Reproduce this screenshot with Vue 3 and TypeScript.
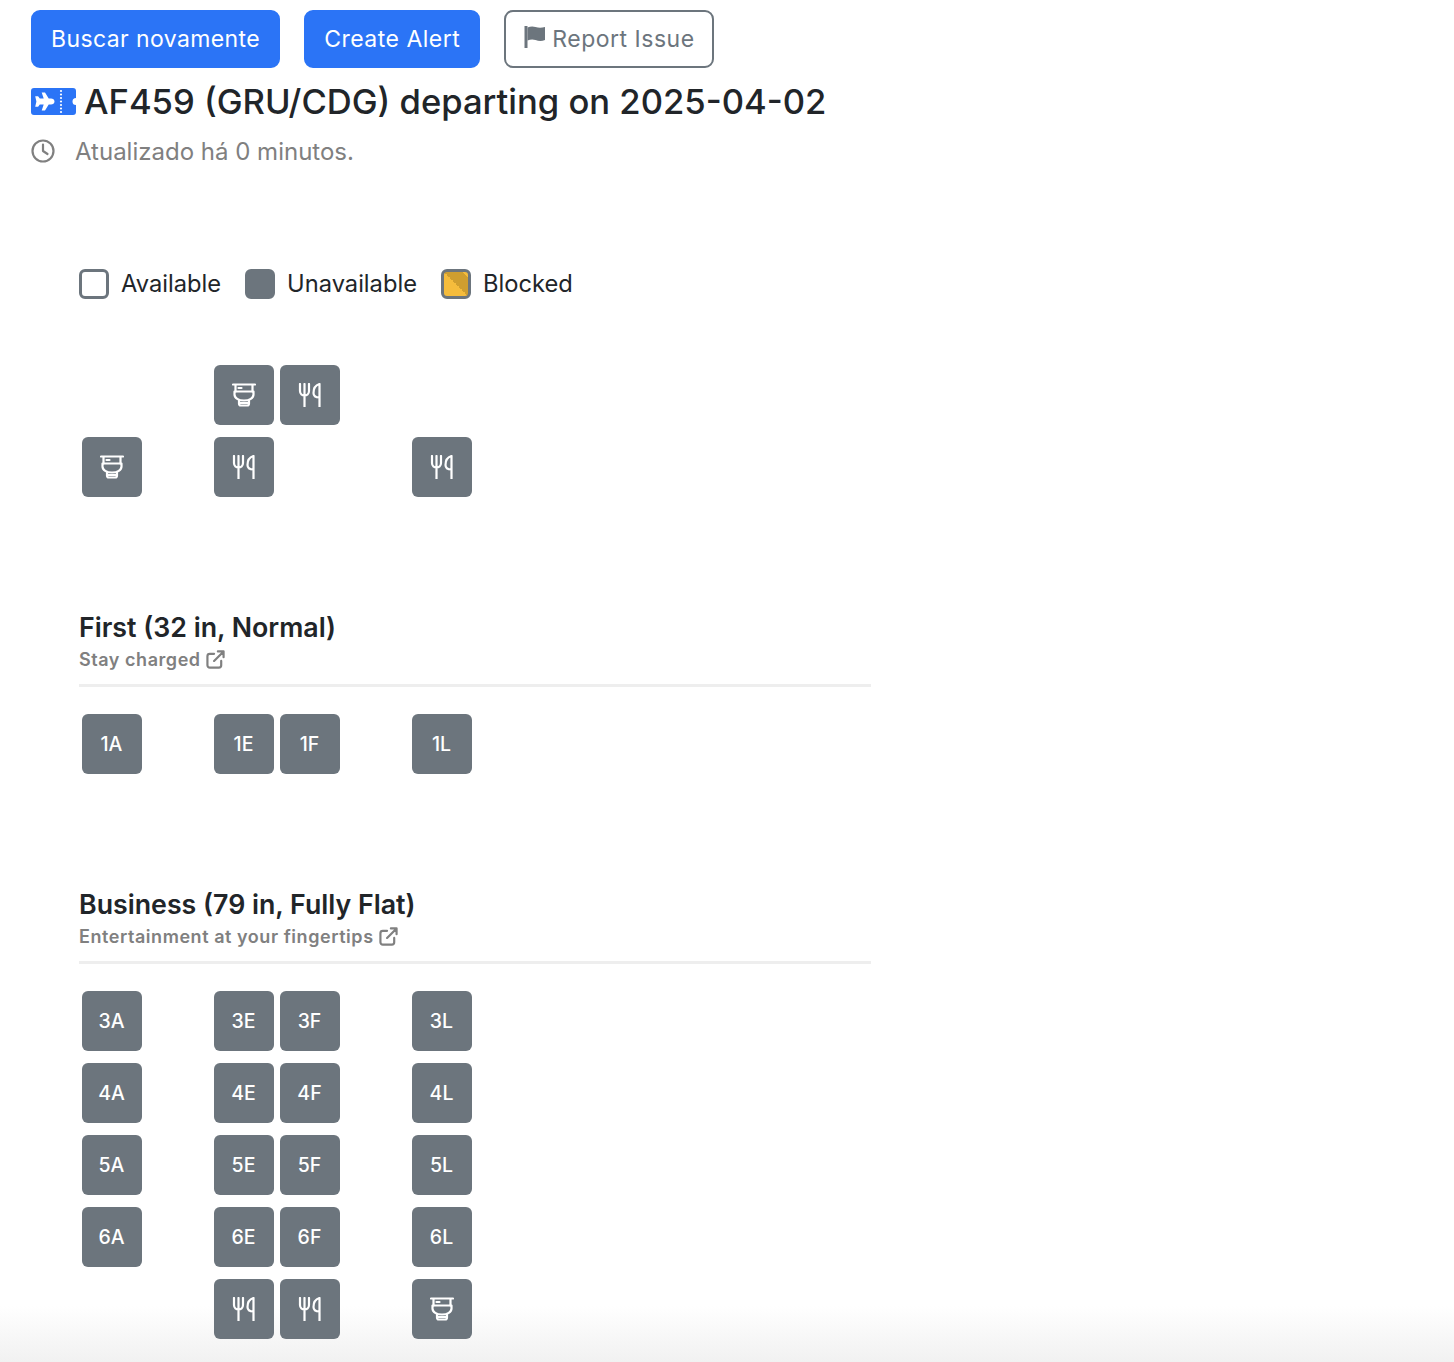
<script setup lang="ts">
type Cell = string | null

const topRows: Cell[] = [
  null, null, 'toilet', 'food', null, null,
  'toilet', null, 'food', null, null, 'food',
]

function seatRow(n: number): Cell[] {
  return [`${n}A`, null, `${n}E`, `${n}F`, null, `${n}L`]
}

const sections: { title: string; sub: string; cells: Cell[] }[] = [
  { title: 'First (32 in, Normal)', sub: 'Stay charged', cells: seatRow(1) },
  {
    title: 'Business (79 in, Fully Flat)',
    sub: 'Entertainment at your fingertips',
    cells: [...seatRow(3), ...seatRow(4), ...seatRow(5), ...seatRow(6), null, null, 'food', 'food', null, 'toilet'],
  },
]
</script>

<template>
  <div class="page">
    <div class="actions">
      <button class="btn primary">Buscar novamente</button>
      <button class="btn primary">Create Alert</button>
      <button class="btn outline">
        <svg class="flag" viewBox="0 0 22 22" aria-hidden="true">
          <path d="M.5 0h3v22h-3z" />
          <path d="M3.500 1.500c2.500-1 5-1.500 8-.5 3 1 6 1 9.500 0v13c-3.500 1.500-6.500 1-9.500 0-3-1-5.500-.5-8 .5z" />
        </svg>
        Report Issue
      </button>
    </div>

    <h1 class="title">
      <svg class="ticket" viewBox="0 0 45 27" aria-hidden="true">
        <path
          fill="#2b74f6"
          d="M3 0h39a3 3 0 0 1 3 3v7a3.500 3.500 0 0 0 0 7v7a3 3 0 0 1-3 3H3a3 3 0 0 1-3-3V3a3 3 0 0 1 3-3z"
        />
        <path
          fill="#fff"
          d="M23.500 13.500c0 1.700-1.600 3-3.500 3h-2.300l-3.700 6h-3.300l2-6H8.800l-1.700 2.300H4.200l1.200-5.300-1.200-5.300h2.900l1.700 2.300h3.900l-2-6H14l3.700 6H20c1.900 0 3.500 1.300 3.500 3z"
        />
        <g fill="#fff">
          <circle cx="30" cy="3" r="1.100" />
          <circle cx="30" cy="6.500" r="1.100" />
          <circle cx="30" cy="10" r="1.100" />
          <circle cx="30" cy="13.500" r="1.100" />
          <circle cx="30" cy="17" r="1.100" />
          <circle cx="30" cy="20.500" r="1.100" />
          <circle cx="30" cy="24" r="1.100" />
        </g>
      </svg>
      <span>AF459 (GRU/CDG) departing on 2025-04-02</span>
    </h1>

    <div class="updated">
      <svg class="clock" viewBox="0 0 24 24" aria-hidden="true">
        <circle cx="12" cy="12" r="10.500" />
        <path d="M12 5.500V12l4.500 3" />
      </svg>
      <span>Atualizado há 0 minutos.</span>
    </div>

    <div class="legend">
      <span class="key"><i class="swatch" />Available</span>
      <span class="key"><i class="swatch filled" />Unavailable</span>
      <span class="key"><i class="swatch blocked" />Blocked</span>
    </div>

    <div class="grid top-grid">
      <template v-for="(cell, i) in topRows" :key="i">
        <div v-if="cell" class="seat">
          <svg v-if="cell === 'toilet'" class="ico" viewBox="0 0 24 24" aria-hidden="true">
            <path d="M1 1.500h22M3.500 2v6.500M20.500 2v6.500" />
            <path d="M6.500 5h3" />
            <path d="M2.500 8.500h19v3c0 3.500-4 6-9.500 6s-9.500-2.500-9.500-6z" />
            <path d="M7 17v3.500c0 1.200.6 2 1.800 2h6.400c1.200 0 1.800-.8 1.800-2V17M7 20h10" />
          </svg>
          <svg v-else class="ico" viewBox="0 0 24 24" aria-hidden="true">
            <path d="M2 1v7c0 3 2.200 4.500 4.500 4.500S11 11 11 8V1M6.500 1v23" />
            <path d="M21.500 24V1c-3.500 1-6 4-6 9 0 2.500 1.500 4.500 6 4.500" />
          </svg>
        </div>
        <div v-else class="empty" />
      </template>
    </div>

    <section v-for="s in sections" :key="s.title" class="cabin">
      <h2 class="cabin-title">{{ s.title }}</h2>
      <div class="cabin-sub">
        {{ s.sub }}
        <svg class="ext" viewBox="0 0 20 20" aria-hidden="true">
          <path d="M16 11.500V16a2.500 2.500 0 0 1-2.500 2.500H4A2.500 2.500 0 0 1 1.500 16V6.500A2.500 2.500 0 0 1 4 4h4.500" />
          <path d="M12.500 1.500h6v6M18.500 1.500L8.500 11.500" />
        </svg>
      </div>
      <div class="rule" />
      <div class="grid">
        <template v-for="(cell, i) in s.cells" :key="i">
          <div v-if="cell && cell !== 'food' && cell !== 'toilet'" class="seat">{{ cell }}</div>
          <div v-else-if="cell" class="seat">
            <svg v-if="cell === 'toilet'" class="ico" viewBox="0 0 24 24" aria-hidden="true">
              <path d="M1 1.500h22M3.500 2v6.500M20.500 2v6.500" />
              <path d="M6.500 5h3" />
              <path d="M2.500 8.500h19v3c0 3.500-4 6-9.500 6s-9.500-2.500-9.500-6z" />
              <path d="M7 17v3.500c0 1.200.6 2 1.800 2h6.400c1.200 0 1.800-.8 1.800-2V17M7 20h10" />
            </svg>
            <svg v-else class="ico" viewBox="0 0 24 24" aria-hidden="true">
              <path d="M2 1v7c0 3 2.200 4.500 4.500 4.500S11 11 11 8V1M6.500 1v23" />
              <path d="M21.500 24V1c-3.500 1-6 4-6 9 0 2.500 1.500 4.500 6 4.500" />
            </svg>
          </div>
          <div v-else class="empty" />
        </template>
      </div>
    </section>
  </div>
</template>

<style scoped>
.page {
  box-sizing: border-box;
  height: 1362px;
  overflow: hidden;
  padding: 10px 0 0 31px;
  background: #fff linear-gradient(to bottom, #ffffff, #f1f1f1) no-repeat bottom / 100% 56px;
  color: #212529;
  font-family: Inter, "Liberation Sans", sans-serif;
}
.actions {
  display: flex;
  gap: 24px;
}
.btn {
  display: flex;
  align-items: center;
  box-sizing: border-box;
  height: 58px;
  padding: 0 18px;
  border-radius: 9px;
  font-family: inherit;
  font-size: 23px;
  letter-spacing: 0.4px;
  border: 2px solid transparent;
}
.btn + .btn {
  letter-spacing: 0.5px;
}
.primary {
  background: #2b74f6;
  border-color: #2b74f6;
  color: #fff;
}
.outline {
  background: #fff;
  border-color: #6c757d;
  color: #6c757d;
  gap: 6px;
  padding-right: 17px;
}
.flag {
  width: 22px;
  height: 22px;
  margin-bottom: 5px;
  fill: #6c757d;
}
.title {
  display: flex;
  align-items: center;
  gap: 8px;
  margin: 13px 0 0;
  height: 40px;
  font-size: 34.6px;
  font-weight: 500;
  line-height: 40px;
}
.ticket {
  width: 45px;
  height: 27px;
  flex: none;
}
.updated {
  display: flex;
  align-items: center;
  gap: 20px;
  margin-top: 15px;
  height: 30px;
  font-size: 24px;
  color: #808080;
}
.clock {
  width: 24px;
  height: 24px;
  fill: none;
  stroke: #808080;
  stroke-width: 2.200;
  stroke-linecap: round;
  stroke-linejoin: round;
}
.legend {
  display: flex;
  gap: 24px;
  margin: 101px 0 0 48px;
  height: 32px;
  font-size: 23.7px;
}
.key {
  display: flex;
  align-items: center;
  gap: 12px;
}
.swatch {
  display: block;
  box-sizing: border-box;
  width: 30px;
  height: 30px;
  margin-top: 2px;
  border: 3px solid #6c757d;
  border-radius: 6px;
}
.filled {
  background: #6c757d;
}
.blocked {
  background: linear-gradient(45deg, #f5bc3c 50%, #cf9e2f 50%, #cf9e2f 88%, #f5bc3c 88%);
}
.grid {
  display: grid;
  grid-template-columns: repeat(6, 60px);
  gap: 12px 6px;
  margin-left: 51px;
}
.top-grid {
  margin-top: 66px;
}
.seat {
  display: flex;
  align-items: center;
  justify-content: center;
  box-sizing: border-box;
  height: 60px;
  padding-right: 1px;
  border-radius: 6px;
  background: #6c757d;
  color: #fff;
  font-size: 19.5px;
  font-weight: 500;
}
.empty {
  height: 60px;
}
.ico {
  width: 24px;
  height: 24px;
  margin-left: 1px;
  fill: none;
  stroke: #fff;
  stroke-width: 2.200;
  stroke-linecap: round;
  stroke-linejoin: round;
}
.cabin {
  margin: 114px 0 0 48px;
}
.cabin .grid {
  margin: 27px 0 0 3px;
}
.cabin-title {
  margin: 0;
  height: 32px;
  font-size: 26.75px;
  font-weight: 600;
  line-height: 32px;
}
.cabin-sub {
  display: flex;
  align-items: center;
  gap: 5px;
  margin-top: 4px;
  height: 24px;
  font-size: 18px;
  font-weight: 600;
  letter-spacing: 0.55px;
  color: #808080;
}
.ext {
  width: 19px;
  height: 19px;
  fill: none;
  stroke: #808080;
  stroke-width: 2.300;
  stroke-linecap: round;
  stroke-linejoin: round;
}
.rule {
  width: 792px;
  height: 3px;
  margin-top: 13px;
  background: #eeeeee;
}
</style>
